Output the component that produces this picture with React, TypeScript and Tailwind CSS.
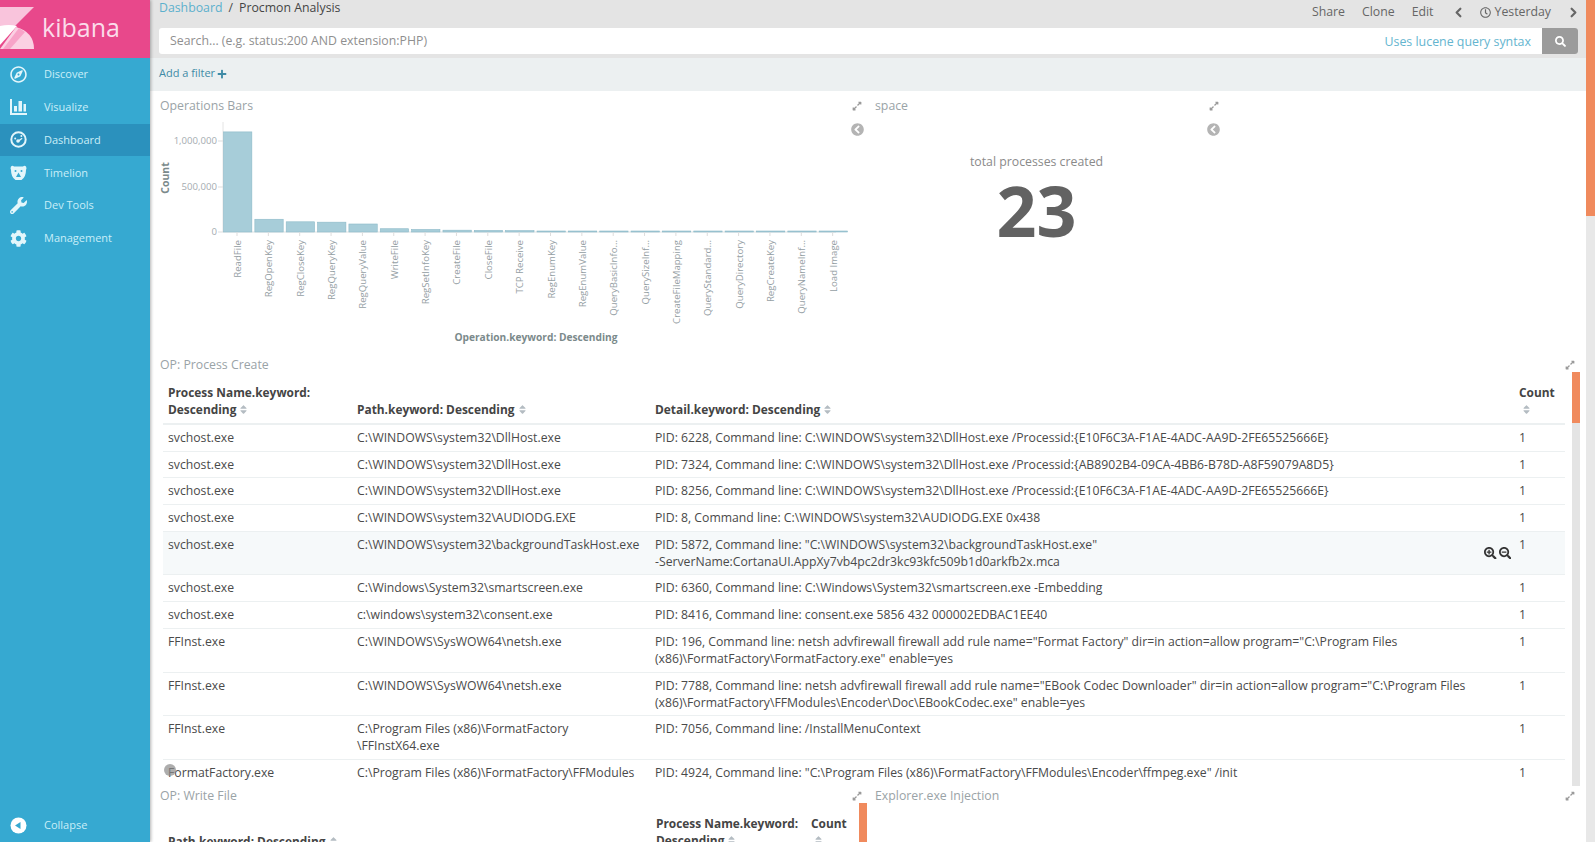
import React from 'react';
import { ChevronLeft, ChevronRight } from 'lucide-react';
import { FaCog, FaRegClock, FaRegCompass, FaSearch, FaSearchMinus, FaSearchPlus, FaWrench, FaPlus, FaChevronCircleLeft, FaExpandAlt, FaSort } from 'react-icons/fa';

const VisualizeIcon = () => (
  <svg width="17" height="16" viewBox="0 0 17 16" fill="currentColor">
    <path d="M0 0h2v14h15v2H0z" />
    <rect x="4" y="7" width="3" height="5.5" />
    <rect x="8.5" y="2" width="3.5" height="10.5" />
    <rect x="13.5" y="5" width="2.5" height="7.5" />
  </svg>
);

const DashboardIcon = () => (
  <svg width="17" height="17" viewBox="0 0 17 17" fill="currentColor">
    <circle cx="8.5" cy="8.5" r="7.2" fill="none" stroke="currentColor" strokeWidth="2" />
    <circle cx="5.2" cy="7.5" r="1" />
    <circle cx="11.4" cy="5" r="1" />
    <circle cx="8" cy="10" r="1.8" />
    <path d="M8 9.4l3.8-2.6.7.9-3.7 3z" />
  </svg>
);

const TimelionIcon = () => (
  <svg width="17" height="16" viewBox="0 0 17 16">
    <path d="M1 1.5Q2.5 0 4 1.5H13Q14.5 0 16 1.5Q17 3 16 5Q16 12 11.5 15H5.5Q1 12 1 5Q0 3 1 1.5Z" fill="currentColor" />
    <circle cx="5.5" cy="6" r="1" fill="#36a9d1" />
    <circle cx="11.5" cy="6" r="1" fill="#36a9d1" />
    <path d="M8.5 7.5L11 12H6Z" fill="#36a9d1" />
  </svg>
);

const CollapseIcon = () => (
  <svg width="17" height="17" viewBox="0 0 17 17">
    <circle cx="8.5" cy="8.5" r="8" fill="#ffffff" />
    <path d="M5 8.5L10.5 5v7z" fill="#36a9d1" />
  </svg>
);

const navItems = [
  { label: 'Discover', icon: <FaRegCompass /> },
  { label: 'Visualize', icon: <VisualizeIcon /> },
  { label: 'Dashboard', icon: <DashboardIcon />, active: true },
  { label: 'Timelion', icon: <TimelionIcon /> },
  { label: 'Dev Tools', icon: <FaWrench /> },
  { label: 'Management', icon: <FaCog /> },
];

const bars = [
  ['ReadFile', 1100000], ['RegOpenKey', 140000], ['RegCloseKey', 112000], ['RegQueryKey', 108000],
  ['RegQueryValue', 88000], ['WriteFile', 36000], ['RegSetInfoKey', 28000], ['CreateFile', 20000],
  ['CloseFile', 17000], ['TCP Receive', 15000], ['RegEnumKey', 10000], ['RegEnumValue', 9000],
  ['QueryBasicInfo...', 6000], ['QuerySizeInf...', 6000], ['CreateFileMapping', 5000], ['QueryStandard...', 5000],
  ['QueryDirectory', 5000], ['RegCreateKey', 4000], ['QueryNameInf...', 4000], ['Load Image', 3000],
] as const;

const rows = [
  ['svchost.exe', 'C:\\WINDOWS\\system32\\DllHost.exe', 'PID: 6228, Command line: C:\\WINDOWS\\system32\\DllHost.exe /Processid:{E10F6C3A-F1AE-4ADC-AA9D-2FE65525666E}'],
  ['svchost.exe', 'C:\\WINDOWS\\system32\\DllHost.exe', 'PID: 7324, Command line: C:\\WINDOWS\\system32\\DllHost.exe /Processid:{AB8902B4-09CA-4BB6-B78D-A8F59079A8D5}'],
  ['svchost.exe', 'C:\\WINDOWS\\system32\\DllHost.exe', 'PID: 8256, Command line: C:\\WINDOWS\\system32\\DllHost.exe /Processid:{E10F6C3A-F1AE-4ADC-AA9D-2FE65525666E}'],
  ['svchost.exe', 'C:\\WINDOWS\\system32\\AUDIODG.EXE', 'PID: 8, Command line: C:\\WINDOWS\\system32\\AUDIODG.EXE 0x438'],
  ['svchost.exe', 'C:\\WINDOWS\\system32\\backgroundTaskHost.exe', 'PID: 5872, Command line: "C:\\WINDOWS\\system32\\backgroundTaskHost.exe"\n-ServerName:CortanaUI.AppXy7vb4pc2dr3kc93kfc509b1d0arkfb2x.mca'],
  ['svchost.exe', 'C:\\Windows\\System32\\smartscreen.exe', 'PID: 6360, Command line: C:\\Windows\\System32\\smartscreen.exe -Embedding'],
  ['svchost.exe', 'c:\\windows\\system32\\consent.exe', 'PID: 8416, Command line: consent.exe 5856 432 000002EDBAC1EE40'],
  ['FFInst.exe', 'C:\\WINDOWS\\SysWOW64\\netsh.exe', 'PID: 196, Command line: netsh advfirewall firewall add rule name="Format Factory" dir=in action=allow program="C:\\Program Files\n(x86)\\FormatFactory\\FormatFactory.exe" enable=yes'],
  ['FFInst.exe', 'C:\\WINDOWS\\SysWOW64\\netsh.exe', 'PID: 7788, Command line: netsh advfirewall firewall add rule name="EBook Codec Downloader" dir=in action=allow program="C:\\Program Files\n(x86)\\FormatFactory\\FFModules\\Encoder\\Doc\\EBookCodec.exe" enable=yes'],
  ['FFInst.exe', 'C:\\Program Files (x86)\\FormatFactory\n\\FFInstX64.exe', 'PID: 7056, Command line: /InstallMenuContext'],
  ['FormatFactory.exe', 'C:\\Program Files (x86)\\FormatFactory\\FFModules', 'PID: 4924, Command line: "C:\\Program Files (x86)\\FormatFactory\\FFModules\\Encoder\\ffmpeg.exe" /init'],
];

const SortIcon = () => <FaSort className="inline-block text-[11px] text-[#b4bcc2] ml-[2px] align-[-1px]" />;
const Expand = () => <FaExpandAlt className="text-[10px] text-[#9a9a9a]" />;
const Collapse = () => <FaChevronCircleLeft className="text-[13px] text-[#b4b4b4]" />;

const Chart = () => {
  const x0 = 73;
  const step = 31.35;
  const base = 118;
  const scale = 91 / 1000000;
  return (
    <svg width="700" height="235" className="block" style={{ fontFamily: '"Open Sans", sans-serif' }}>
      <line x1={x0} y1="8" x2={x0} y2={base} stroke="#e4e4e4" />
      <line x1={x0} y1={base} x2="686" y2={base} stroke="#dfe3e4" />
      {[[27, '1,000,000'], [73, '500,000'], [118, '0']].map(([y, t]) => (
        <g key={t as string}>
          <line x1="68" x2={x0} y1={y as number} y2={y as number} stroke="#ddd" />
          <text x="67" y={(y as number) + 3} textAnchor="end" fontSize="9.6" fill="#a5acb0">{t}</text>
        </g>
      ))}
      <text transform="translate(19 64) rotate(-90)" textAnchor="middle" fontSize="10.5" fontWeight="700" fill="#7b8a8b">Count</text>
      {bars.map(([name, v], i) => {
        const h = Math.max(v * scale, 1);
        const x = x0 + i * step;
        return (
          <g key={name}>
            <rect x={x + 0.5} y={base - h} width={step - 3} height={h} fill="#a7cdd9" stroke="#8dbac8" strokeWidth="0.6" />
            <line x1={x + 14} x2={x + 14} y1={base} y2={base + 4} stroke="#ddd" />
            <text transform={`translate(${x + 18} ${base + 8}) rotate(-90)`} textAnchor="end" fontSize="9.6" fill="#95a0a4">{name}</text>
          </g>
        );
      })}
      <text x="386" y="227" textAnchor="middle" fontSize="10.2" fontWeight="700" fill="#7b8a8b">Operation.keyword: Descending</text>
    </svg>
  );
};

const KibanaLogo = () => (
  <svg width="36" height="42" viewBox="0 0 36 42" className="shrink-0">
    <path d="M0 0H34L0 34Z" fill="#f9c4dc" />
    <path d="M0 19Q9 17 17 19L0 38Z" fill="#ffffff" />
    <path d="M0 42L16 20Q34 25 34 42Z" fill="#fbd0e3" />
    <path d="M3 42L19 21L25 25L10 42Z" fill="#f7a3c8" />
  </svg>
);

export default function App() {
  return (
    <div className="flex h-[842px] w-full overflow-hidden bg-white text-[12.3px] text-[#4a4a4a]" style={{ fontFamily: '"Open Sans", sans-serif' }}>
      {/* sidebar */}
      <aside className="relative z-10 flex w-[150px] shrink-0 flex-col bg-[#36a9d1] text-[#c9eef8] shadow-[1px_0_3px_rgba(0,0,0,0.3)]">
        <div className="flex h-[58px] items-center gap-[6px] bg-[#e8488b] pb-[3px]">
          <KibanaLogo />
          <span className="text-[25px] leading-none text-[#fbdcea]">kibana</span>
        </div>
        <nav className="flex flex-col">
          {navItems.map(item => (
            <div key={item.label} className={`flex h-[32.8px] items-center gap-[17px] pl-[10px] ${item.active ? 'bg-[#2b91bd]' : ''}`}>
              <span className="flex w-[17px] justify-center text-[17px] text-[#e3f6fb]">{item.icon}</span>
              <span className="text-[11px]">{item.label}</span>
            </div>
          ))}
        </nav>
        <div className="mt-auto flex h-[33px] items-center gap-[17px] pl-[10px]">
          <CollapseIcon />
          <span className="text-[11px]">Collapse</span>
        </div>
      </aside>

      <div className="flex min-w-0 flex-1 flex-col">
        {/* top bar */}
        <header className="h-[58px] shrink-0 bg-[#e4e4e4] pl-[9px] pr-[8px]">
          <div className="flex h-[28px] items-start justify-between">
            <div className="-mt-[1px] flex gap-[6px]">
              <span className="text-[#5cb0cd]">Dashboard</span>
              <span>/</span>
              <span className="text-[#444]">Procmon Analysis</span>
            </div>
            <div className="-mr-[3px] flex items-center gap-[17px] pt-[3px] text-[#666]">
              <span>Share</span>
              <span>Clone</span>
              <span>Edit</span>
              <ChevronLeft size={15} strokeWidth={3.5} />
              <span className="-ml-[3px] flex items-center gap-[4px]"><FaRegClock className="text-[11px]" />Yesterday</span>
              <ChevronRight size={15} strokeWidth={3.5} className="-ml-[2px]" />
            </div>
          </div>
          <div className="flex h-[26px] overflow-hidden rounded-[3px] bg-white">
            <span className="flex-1 pl-[11px] leading-[26px] text-[#8f8f8f]">Search... (e.g. status:200 AND extension:PHP)</span>
            <span className="pr-[11px] text-[12.4px] leading-[28px] text-[#64b5cf]">Uses lucene query syntax</span>
            <span className="flex w-[36px] items-center justify-center bg-[#9b9b9b] text-white"><FaSearch className="text-[11px]" /></span>
          </div>
        </header>

        {/* filter bar */}
        <div className="flex h-[33px] shrink-0 items-center gap-[2px] bg-[#ecf0f1] pl-[9px] pb-[2px] text-[11px] text-[#3f8ba6]">
          Add a filter <FaPlus className="text-[10px]" />
        </div>

        <main className="min-h-0 min-w-0 flex-1">
          {/* first row of panels */}
          <section className="flex h-[264px]">
            <div className="w-[717px] shrink-0 pl-[10px] pt-[6px]">
              <div className="flex items-center justify-between pr-[5px]">
                <span className="text-[#9aa3a7]">Operations Bars</span>
                <Expand />
              </div>
              <div className="relative -ml-[10px] -mt-[1px]">
                <Chart />
                <div className="absolute right-[3px] top-[9px]"><Collapse /></div>
              </div>
            </div>
            <div className="flex w-[363px] shrink-0 flex-col pl-[8px] pt-[6px]">
              <div className="flex items-center justify-between pr-[11px]">
                <span className="text-[#9aa3a7]">space</span>
                <Expand />
              </div>
              <div className="flex justify-end pr-[10px] pt-[8px]"><Collapse /></div>
              <div className="flex flex-col items-center pr-[32px] pt-[17px]">
                <span className="text-[#8a8a8a]">total processes created</span>
                <span className="text-[70px] font-bold leading-[76px] text-[#626262]">23</span>
              </div>
            </div>
          </section>

          {/* process create */}
          <section className="h-[431px] overflow-hidden pl-[10px] pr-[6px]">
            <div className="flex h-[17px] items-center justify-between pr-[5px] pt-[3px]">
              <span className="text-[#9aa3a7]">OP: Process Create</span>
              <Expand />
            </div>
            <div className="flex gap-[7px]">
              <table className="ml-[3px] w-[1402px] shrink-0 table-fixed border-collapse text-left text-[12.22px]">
                <colgroup>
                  <col className="w-[189px]" />
                  <col className="w-[298px]" />
                  <col className="w-[864px]" />
                  <col />
                </colgroup>
                <thead>
                  <tr className="border-b-2 border-[#ecf0f1] align-bottom text-[11.9px] font-bold leading-[17px] text-[#444]">
                    <th className="px-[5px] pb-[5px] pt-[12px]">Process Name.keyword:<br />Descending<SortIcon /></th>
                    <th className="px-[5px] pb-[5px] pt-[12px]">Path.keyword: Descending<SortIcon /></th>
                    <th className="px-[5px] pb-[5px] pt-[12px]">Detail.keyword: Descending<SortIcon /></th>
                    <th className="px-[5px] pb-[5px] pt-[12px]">Count<br /><SortIcon /></th>
                  </tr>
                </thead>
                <tbody>
                  {rows.map((row, i) => (
                    <tr key={i} className={`border-b border-[#ecf0f1] align-top leading-[17px] ${i === 4 ? 'bg-[#f6f9fa]' : ''}`}>
                      <td className="relative px-[5px] pb-[4.7px] pt-[4px]">
                        {row[0]}
                        {i === 10 && <span className="absolute left-[1px] top-[4px] h-[12px] w-[12px] rounded-full bg-[#8a8a8a]/70" />}
                      </td>
                      <td className="whitespace-pre-line px-[5px] pb-[4.7px] pt-[4px]">{row[1]}</td>
                      <td className="relative whitespace-pre-line px-[5px] pb-[4.7px] pt-[4px]">
                        {row[2]}
                        {i === 4 && (
                          <span className="absolute right-[3px] top-[15px] flex gap-[2px] text-[12.5px] text-[#333]">
                            <FaSearchPlus /><FaSearchMinus />
                          </span>
                        )}
                      </td>
                      <td className="px-[5px] pb-[4.7px] pt-[4px]">1</td>
                    </tr>
                  ))}
                </tbody>
              </table>
              <div className="h-[414px] w-[8px] shrink-0 bg-[#e4e4e4]">
                <div className="h-[51px] bg-[#f08a5d]" />
              </div>
            </div>
          </section>

          {/* bottom panels */}
          <section className="flex h-[56px] overflow-hidden">
            <div className="w-[717px] shrink-0 pl-[10px]">
              <div className="flex h-[17px] items-center justify-between pr-[5px] pt-[3px]">
                <span className="text-[#9aa3a7]">OP: Write File</span>
                <Expand />
              </div>
              <div className="flex whitespace-nowrap text-[11.9px] font-bold leading-[17px] text-[#444]">
                <div className="w-[490px] pl-[8px] pt-[30px]">Path.keyword: Descending<SortIcon /></div>
                <div className="w-[161px] pl-[6px] pt-[12px]">Process Name.keyword:<br />Descending<SortIcon /></div>
                <div className="pt-[12px]">Count<br /><SortIcon /></div>
                <div className="ml-auto h-[40px] w-[8px] bg-[#f08a5d]" />
              </div>
            </div>
            <div className="flex-1 pl-[8px]">
              <div className="flex h-[17px] items-center justify-between pr-[11px] pt-[3px]">
                <span className="text-[#9aa3a7]">Explorer.exe Injection</span>
                <Expand />
              </div>
            </div>
          </section>
        </main>
      </div>

      {/* page scrollbar */}
      <div className="w-[9px] shrink-0 bg-[#e8e8e8]">
        <div className="h-[216px] bg-[#f08a5d]" />
      </div>
    </div>
  );
}
